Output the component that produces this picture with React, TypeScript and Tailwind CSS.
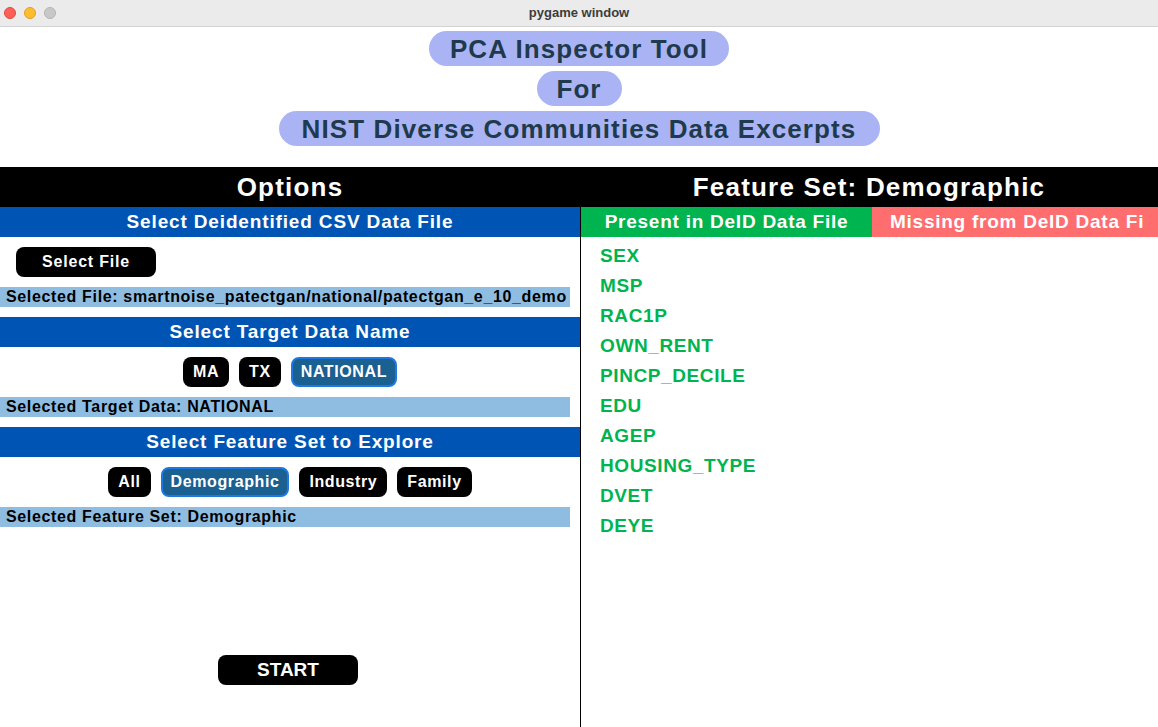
import React, { useState } from 'react';

const targets = ['MA', 'TX', 'NATIONAL'];
const featureSets = ['All', 'Demographic', 'Industry', 'Family'];
const presentFeatures = [
  'SEX',
  'MSP',
  'RAC1P',
  'OWN_RENT',
  'PINCP_DECILE',
  'EDU',
  'AGEP',
  'HOUSING_TYPE',
  'DVET',
  'DEYE',
];

const SectionBar: React.FC<{ title: string }> = ({ title }) => (
  <div className="h-[30px] bg-[#0055b4] flex items-center justify-center text-white text-[19px] font-bold tracking-[0.85px]">
    {title}
  </div>
);

const InfoBar: React.FC<{ text: string }> = ({ text }) => (
  <div className="h-[20px] w-[570px] bg-[#8fbde2] flex items-center pl-[6px] text-[16px] font-bold text-black whitespace-nowrap tracking-[0.65px]">
    {text}
  </div>
);

const Pill: React.FC<{ label: string; active: boolean; onClick: () => void }> = ({ label, active, onClick }) => (
  <button
    onClick={onClick}
    className={`h-[30px] rounded-[8px] text-[16px] font-bold text-white flex items-center tracking-[0.6px] ${
      active ? 'px-[8px] bg-[#1a6091] border-2 border-[#1e78e0]' : 'px-[10px] bg-black'
    }`}
  >
    {label}
  </button>
);

const TitlePill: React.FC<{ text: string; width: string }> = ({ text, width }) => (
  <div className={`h-[35px] ${width} rounded-full bg-[#aab4f5] flex items-center justify-center text-[26px] font-bold text-[#1e3a4c] tracking-[1.1px] pt-[2px]`}>
    {text}
  </div>
);

export default function App() {
  const [target, setTarget] = useState('NATIONAL');
  const [featureSet, setFeatureSet] = useState('Demographic');

  return (
    <div className="w-[1158px] h-[727px] overflow-hidden bg-white flex flex-col" style={{ fontFamily: '"Liberation Sans", Arial, sans-serif' }}>
      {/* window chrome */}
      <div className="h-[27px] shrink-0 bg-[#ebebeb] border-b border-[#d2d2d2] flex items-center relative">
        <div className="flex items-center gap-[8px] pl-[4px]">
          <span className="w-[12px] h-[12px] rounded-full bg-[#fe5f57] border border-[#e14942]" />
          <span className="w-[12px] h-[12px] rounded-full bg-[#febc2e] border border-[#dfa023]" />
          <span className="w-[12px] h-[12px] rounded-full bg-[#c8c8c8] border border-[#b4b4b4]" />
        </div>
        <div className="absolute inset-0 flex items-center justify-center text-[13px] font-bold text-[#3c3c3c]">
          pygame window
        </div>
      </div>

      {/* titles */}
      <div className="h-[140px] shrink-0 flex flex-col items-center pt-[4px] gap-[5px]">
        <TitlePill text="PCA Inspector Tool" width="w-[300px]" />
        <TitlePill text="For" width="w-[85px]" />
        <TitlePill text="NIST Diverse Communities Data Excerpts" width="w-[601px]" />
      </div>

      {/* header row */}
      <div className="h-[40px] shrink-0 bg-black flex text-white text-[26px] tracking-[1.2px]">
        <div className="w-[580px] flex items-center justify-center font-bold">Options</div>
        <div className="flex-1 flex items-center justify-center font-bold">Feature Set: {featureSet}</div>
      </div>

      <div className="flex flex-1 min-h-0">
        {/* options column */}
        <div className="w-[580px] shrink-0 flex flex-col">
          <SectionBar title="Select Deidentified CSV Data File" />
          <div className="py-[10px] pl-[16px]">
            <button className="w-[140px] h-[30px] rounded-[8px] bg-black text-white text-[16px] font-bold tracking-[0.8px]">
              Select File
            </button>
          </div>
          <InfoBar text="Selected File: smartnoise_patectgan/national/patectgan_e_10_demo" />
          <div className="h-[10px]" />
          <SectionBar title="Select Target Data Name" />
          <div className="py-[10px] flex justify-center gap-[10px]">
            {targets.map((t) => (
              <Pill key={t} label={t} active={t === target} onClick={() => setTarget(t)} />
            ))}
          </div>
          <InfoBar text={`Selected Target Data: ${target}`} />
          <div className="h-[10px]" />
          <SectionBar title="Select Feature Set to Explore" />
          <div className="py-[10px] flex justify-center gap-[10px]">
            {featureSets.map((f) => (
              <Pill key={f} label={f} active={f === featureSet} onClick={() => setFeatureSet(f)} />
            ))}
          </div>
          <InfoBar text={`Selected Feature Set: ${featureSet}`} />
          <div className="pt-[128px] pl-[218px]">
            <button className="w-[140px] h-[30px] rounded-[8px] bg-black text-white text-[19px] font-bold">
              START
            </button>
          </div>
        </div>

        {/* features column */}
        <div className="flex-1 border-l border-black flex flex-col min-w-0">
          <div className="h-[30px] flex text-white text-[19px] font-bold tracking-[0.75px]">
            <div className="w-[291px] bg-[#00b450] flex items-center justify-center">Present in DeID Data File</div>
            <div className="flex-1 bg-[#ff6e6e] flex items-center pl-[18px] overflow-hidden whitespace-nowrap">
              Missing from DeID Data Fi
            </div>
          </div>
          <ul className="pt-[4px] pl-[19px]">
            {presentFeatures.map((f) => (
              <li key={f} className="h-[30px] flex items-center text-[19px] font-bold text-[#00b450] tracking-[0.6px]">
                {f}
              </li>
            ))}
          </ul>
        </div>
      </div>
    </div>
  );
}
